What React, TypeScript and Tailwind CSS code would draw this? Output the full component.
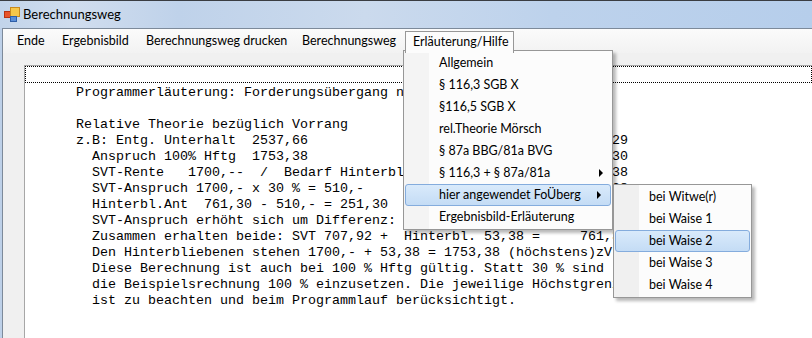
import React from "react";

const MONO = "font-['Liberation_Mono',monospace]";

// pad a line out to a given column, then append what sits further right
function at(left: string, col: number, right: string): string {
  return left.padEnd(col, " ") + right;
}

const LINES: string[] = [
  "Programmerläuterung: Forderungsübergang nach § 116 SGB X",
  "",
  "Relative Theorie bezüglich Vorrang",
  at("z.B: Entg. Unterhalt  2537,66", 63, "761,29"),
  at("  Anspruch 100% Hftg  1753,38", 63, "761,30"),
  at("  SVT-Rente   1700,--  /  Bedarf Hinterbl. 761,30", 62, "1753,38"),
  at("  SVT-Anspruch 1700,- x 30 % = 510,-", 62, "1753,38"),
  "  Hinterbl.Ant  761,30 - 510,- = 251,30",
  "  SVT-Anspruch erhöht sich um Differenz:  197,92",
  "  Zusammen erhalten beide: SVT 707,92 +  Hinterbl. 53,38 =     761,30",
  "  Den Hinterbliebenen stehen 1700,- + 53,38 = 1753,38 (höchstens)zV",
  "  Diese Berechnung ist auch bei 100 % Hftg gültig. Statt 30 % sind",
  "  die Beispielsrechnung 100 % einzusetzen. Die jeweilige Höchstgrenze",
  "  ist zu beachten und beim Programmlauf berücksichtigt.",
];

const MENU = [
  { label: "Ende", w: "w-[45px]" },
  { label: "Ergebnisbild", w: "w-[84px]" },
  { label: "Berechnungsweg drucken", w: "w-[156px]" },
  { label: "Berechnungsweg", w: "w-[110px]" },
];

const HELP_ITEMS = [
  { label: "Allgemein" },
  { label: "§ 116,3 SGB X" },
  { label: "§116,5 SGB X" },
  { label: "rel.Theorie Mörsch" },
  { label: "§ 87a BBG/81a BVG" },
  { label: "§ 116,3 + § 87a/81a", sub: true },
  { label: "hier angewendet FoÜberg", sub: true, active: true },
  { label: "Ergebnisbild-Erläuterung" },
];

const SUB_ITEMS = [
  { label: "bei Witwe(r)" },
  { label: "bei Waise 1" },
  { label: "bei Waise 2", active: true },
  { label: "bei Waise 3" },
  { label: "bei Waise 4" },
];

function AppIcon() {
  return (
    <svg width="16" height="16" viewBox="0 0 16 16" aria-hidden="true">
      <rect x="0.5" y="4.5" width="6" height="6" fill="#e8542a" stroke="#b83312" />
      <rect x="6.5" y="0.5" width="9" height="9" fill="#f7c84a" stroke="#c98a1c" />
      <rect x="6.5" y="9.5" width="6" height="5" fill="#5b8fd8" stroke="#2f5fa8" />
    </svg>
  );
}

function Arrow() {
  return <span className="ml-auto mr-[9px] h-0 w-0 border-y-[4px] border-l-[4px] border-y-transparent border-l-black" />;
}

interface Item {
  label: string;
  sub?: boolean;
  active?: boolean;
}

function MenuRow({ item }: { item: Item }) {
  if (item.active) {
    return (
      <div className="mx-[1px] flex h-[22px] items-center rounded-[3px] border border-[#84acdd] bg-[linear-gradient(#d9eafb,#c4dcf5)] pl-[33px]">
        <span>{item.label}</span>
        {item.sub && <Arrow />}
      </div>
    );
  }
  return (
    <div className="flex h-[22px] items-center pl-[35px]">
      <span>{item.label}</span>
      {item.sub && <Arrow />}
    </div>
  );
}

export default function App() {
  return (
    <div className="relative h-[338px] w-[812px] overflow-hidden bg-[#f0f0f0] font-['Lato',sans-serif] text-[12.5px] text-black">
      {/* title bar */}
      <div className="flex h-[28px] items-center border-t border-[#3a3d42] bg-[linear-gradient(90deg,#c2d4ea_0%,#d0ddee_9%,#bfd2ea_22%,#cbdaed_45%,#bdd2ec_68%,#b6ceeb_100%)] pl-[4px]">
        <AppIcon />
        <span className="ml-[3px] text-[13px]">Berechnungsweg</span>
      </div>

      <div className="flex h-[310px]">
        <div className="w-[2px] bg-[#bdd0e8]" />
        <div className="flex flex-1 flex-col border-l border-t border-[#7d8a9a]">
          {/* menu strip */}
          <div className="flex h-[24px] bg-[linear-gradient(#fbfbfb,#f2f2f2)] pl-[7px]">
            {MENU.map((m) => (
              <div key={m.label} className={`flex items-center pl-[7px] ${m.w}`}>
                {m.label}
              </div>
            ))}
            <div className="relative z-20 mt-[2px] flex w-[109px] items-center border border-b-0 border-[#979797] bg-[#fcfcfc] pl-[7px]">
              Erläuterung/Hilfe
            </div>
          </div>
          <div className="h-[12px]" />

          {/* text box */}
          <div className="ml-[21px] flex-1 border-l border-t border-[#a7a7a7] bg-white">
            <div className="h-[17px] border border-dotted border-black" />
            <div className={`${MONO} whitespace-pre pl-[51px] pt-[2px] text-[13.33px] leading-[16px]`}>
              {LINES.map((l, i) => (
                <div key={i} className="h-[16px]">
                  {l}
                </div>
              ))}
            </div>
          </div>
        </div>
      </div>

      {/* open dropdown */}
      <div className="absolute left-[403px] top-[50px] z-10 h-[180px] w-[210px] border border-[#979797] bg-[linear-gradient(90deg,#f4f4f4_0,#f4f4f4_25px,#fcfcfc_25px)] py-[1px] shadow-[3px_3px_3px_rgba(0,0,0,0.28)]">
        {HELP_ITEMS.map((it) => (
          <MenuRow key={it.label} item={it} />
        ))}
      </div>

      {/* submenu */}
      <div className="absolute left-[613px] top-[184px] z-30 h-[114px] w-[139px] border border-[#979797] bg-[linear-gradient(90deg,#f0f0f0_0,#f0f0f0_25px,#fcfcfc_25px)] py-[1px] shadow-[3px_3px_3px_rgba(0,0,0,0.28)]">
        {SUB_ITEMS.map((it) => (
          <MenuRow key={it.label} item={it} />
        ))}
      </div>
    </div>
  );
}
